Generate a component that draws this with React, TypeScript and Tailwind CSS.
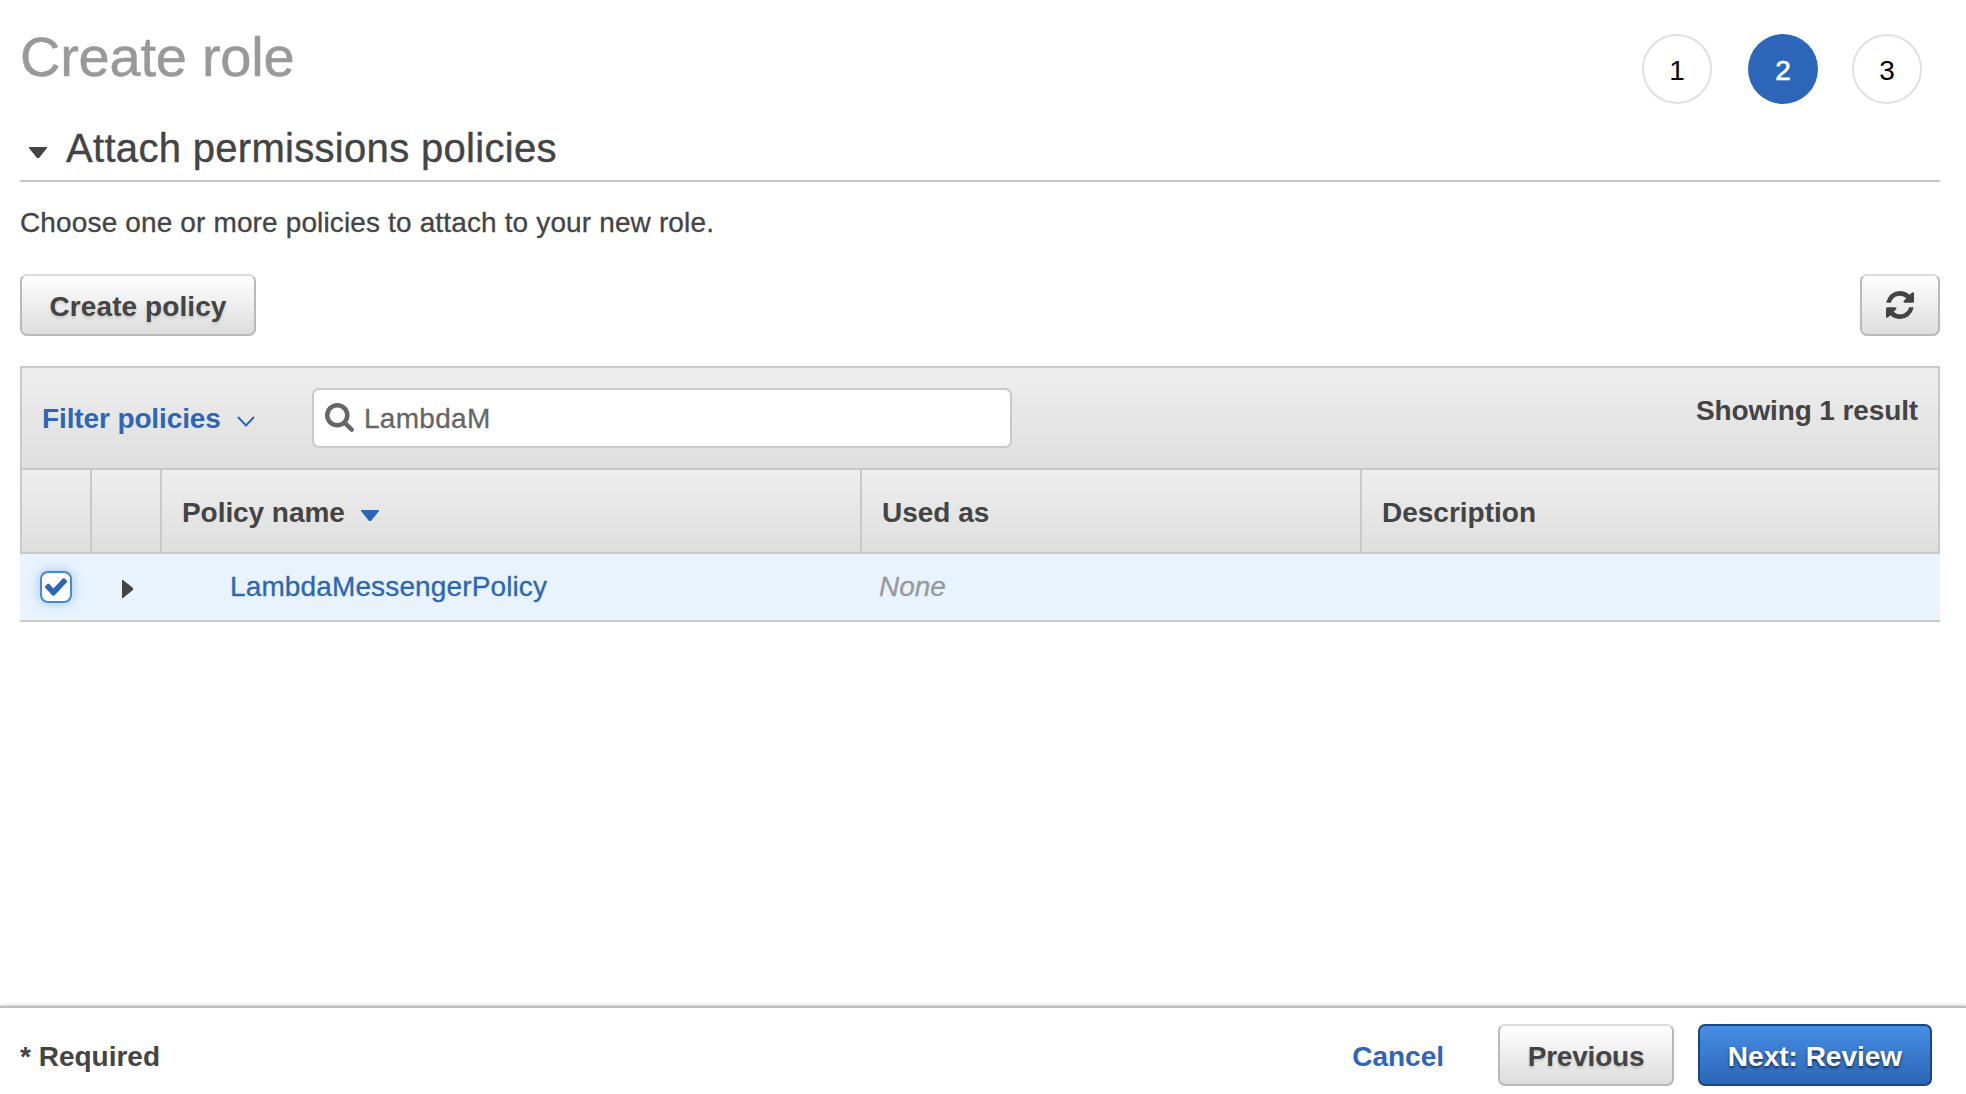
const grayButton =
  "flex h-[62px] items-center justify-center rounded-[7px] border-2 border-[#b9b9b9] border-t-[#dcdcdc] bg-linear-to-b from-white to-[#dddddd] pt-[3px] font-bold [text-shadow:0_2px_3px_rgba(0,0,0,0.15)]";

const columns = "grid grid-cols-[70px_70px_700px_500px_1fr]";

function Step({ n, active }: { n: number; active?: boolean }) {
  return (
    <div
      className={
        active
          ? "flex size-[70px] items-center justify-center rounded-full bg-[#2d66b8] pt-[3px] text-white [-webkit-text-stroke:0.6px_white]"
          : "flex size-[70px] items-center justify-center rounded-full border-2 border-[#e0e0e0] pt-[3px] text-black"
      }
    >
      {n}
    </div>
  );
}

function RefreshIcon() {
  return (
    <svg viewBox="0 0 1536 1536" className="mb-[3px] size-[28px]" fill="#444">
      <path d="M1511 928q0 5-1 7-64 268-268 434.500T764 1536q-146 0-282.500-55T238 1324l-129 129q-19 19-45 19t-45-19-19-45V960q0-26 19-45t45-19h448q26 0 45 19t19 45-19 45l-137 137q71 66 161 102t187 36q134 0 250-65t186-179q11-17 53-117 8-23 30-23h192q13 0 22.500 9.500t9.500 22.500zm25-800v448q0 26-19 45t-45 19h-448q-26 0-45-19t-19-45 19-45l138-138Q969 256 768 256q-134 0-250 65T332 500q-11 17-53 117-8 23-30 23H50q-13 0-22.500-9.500T18 608v-7q65-268 270-434.500T768 0q146 0 284 55.500T1297 212l130-129q19-19 45-19t45 19 19 45z" />
    </svg>
  );
}

function SearchIcon() {
  return (
    <svg viewBox="0 0 1664 1664" className="mb-[2px] size-[29px]" fill="#666">
      <path d="M1152 704q0-185-131.500-316.500T704 256 387.500 387.500 256 704t131.500 316.500T704 1152t316.500-131.500T1152 704zm512 832q0 52-38 90t-90 38q-54 0-90-38l-343-342q-179 124-399 124-143 0-273.500-55.500t-225-150-150-225T0 704t55.500-273.500 150-225 225-150T704 0t273.500 55.500 225 150 150 225T1408 704q0 220-124 399l343 343q37 37 37 90z" />
    </svg>
  );
}

function CheckIcon() {
  return (
    <svg viewBox="121 334 1550 1188" preserveAspectRatio="none" className="h-[18px] w-[22px]" fill="#2d66b8">
      <path d="M1671 566q0 40-28 68l-724 724-136 136q-28 28-68 28t-68-28l-136-136-362-362q-28-28-28-68t28-68l136-136q28-28 68-28t68 28l294 295 656-657q28-28 68-28t68 28l136 136q28 28 28 68z" transform="translate(0 0)" />
    </svg>
  );
}

export default function App() {
  return (
    <div className="flex h-[1094px] w-full flex-col overflow-hidden bg-white font-['Liberation_Sans',Arial,sans-serif] text-[28px] leading-[32px] text-[#444]">
      <main className="flex flex-1 flex-col px-[20px] pr-[26px]">
        <header className="flex h-[120px] justify-between pr-[18px]">
          <h1 className="pt-[25px] text-[56px] leading-[64px] tracking-[-0.25px] text-[#999] [-webkit-text-stroke:0.5px_#999]">Create role</h1>
          <div className="flex pt-[34px]">
            <Step n={1} />
            <div className="w-[36px]" />
            <Step n={2} active />
            <div className="w-[34px]" />
            <Step n={3} />
          </div>
        </header>

        <h2 className="flex h-[62px] items-start border-b-2 border-[#c8c8c8] pl-[9px] text-[40px] leading-[46px]">
          <svg viewBox="0 0 18 11" className="mt-[27px] mr-[19px] h-[11px] w-[18px]" fill="#444">
            <path d="M0 0h18v1L10 11H8L0 1z" />
          </svg>
          <span className="pt-[5px] tracking-[0.31px] [-webkit-text-stroke:0.4px_#444]">Attach permissions policies</span>
        </h2>

        <p className="pt-[25px] leading-[32px] tracking-[0.14px] [-webkit-text-stroke:0.3px_#444]">
          Choose one or more policies to attach to your new role.
        </p>

        <div className="mt-[35px] flex justify-between">
          <button className={`${grayButton} w-[236px] tracking-[0.08px]`}>Create policy</button>
          <button className={`${grayButton} w-[80px]`} aria-label="Refresh">
            <RefreshIcon />
          </button>
        </div>

        <section className="mt-[30px]">
          <div className="flex h-[104px] items-start border-2 border-[#c9c9c9] bg-linear-to-b from-[#eeeeee] to-[#dfdfdf] pr-[20px] pl-[20px]">
            <button className="flex w-[270px] items-center pt-[35px] font-bold text-[#2d66b8]">
              <span className="tracking-[-0.12px]">Filter policies</span>
              <svg viewBox="0 0 18 12" className="mt-[6px] ml-[16px] h-[12px] w-[18px]" fill="none" stroke="#2d66b8" strokeWidth="2">
                <path d="M1 1l8 8.500L17 1" />
              </svg>
            </button>
            <div className="mt-[20px] flex h-[60px] w-[700px] items-center rounded-[7px] border-2 border-[#c9c9c9] bg-white pl-[11px] text-[#666]">
              <SearchIcon />
              <span className="pt-[2px] pl-[10px] tracking-[0.3px] [-webkit-text-stroke:0.3px_#666]">LambdaM</span>
            </div>
            <span className="ml-auto pt-[27px] font-bold tracking-[-0.12px]">Showing 1 result</span>
          </div>

          <div className={`${columns} h-[84px] border-x-2 border-b-2 border-[#c9c9c9] bg-linear-to-b from-[#eeeeee] to-[#dfdfdf] font-bold`}>
            <div className="border-r-2 border-[#c9c9c9]" />
            <div className="border-r-2 border-[#c9c9c9]" />
            <div className="flex items-center border-r-2 border-[#c9c9c9] pl-[20px]">
              <span className="pt-[3px] tracking-[-0.06px]">Policy name</span>
              <svg viewBox="0 0 18 11" className="mt-[8px] ml-[16px] h-[11px] w-[18px]" fill="#2d66b8">
                <path d="M0 0h18v1L10 11H8L0 1z" />
              </svg>
            </div>
            <div className="flex items-center border-r-2 border-[#c9c9c9] pt-[3px] pl-[20px]">Used as</div>
            <div className="flex items-center pt-[3px] pl-[20px]">Description</div>
          </div>

          <div className={`${columns} h-[68px] items-center border-b-2 border-[#c9c9c9] bg-[#e8f3fe] pl-[2px]`}>
            <div className="ml-[18px] flex size-[32px] items-center justify-center rounded-[8px] border-2 border-[#4488da] bg-white shadow-[0_0_12px_rgba(68,136,218,0.45)]">
              <CheckIcon />
            </div>
            <svg viewBox="0 0 11 18" className="mt-[3px] ml-[30px] h-[18px] w-[11px]" fill="#444">
              <path d="M0 0h1l10 8v2L1 18H0z" />
            </svg>
            <a className="pl-[68px] tracking-[0.13px] text-[#2d66b8] [-webkit-text-stroke:0.3px_#2d66b8]">LambdaMessengerPolicy</a>
            <span className="pl-[17px] text-[#999] italic [-webkit-text-stroke:0.3px_#999]">None</span>
          </div>
        </section>
      </main>

      <footer className="flex h-[88px] items-start justify-between border-t-2 border-[#bdbdbd] pt-[16px] pr-[34px] pl-[20px] shadow-[0_-1px_3px_rgba(0,0,0,0.2)]">
        <span className="pt-[17px] font-bold">* Required</span>
        <div className="flex font-bold">
          <a className="mr-[54px] pt-[17px] text-[#2d66b8]">Cancel</a>
          <button className={`${grayButton} mr-[24px] w-[176px] tracking-[-0.2px]`}>Previous</button>
          <button className="flex h-[62px] w-[234px] items-center justify-center rounded-[7px] border-2 border-[#1c4680] bg-linear-to-b from-[#468ee5] to-[#2c66b6] pt-[3px] text-white [text-shadow:0_2px_3px_rgba(0,0,0,0.6)]">
            Next: Review
          </button>
        </div>
      </footer>
    </div>
  );
}
